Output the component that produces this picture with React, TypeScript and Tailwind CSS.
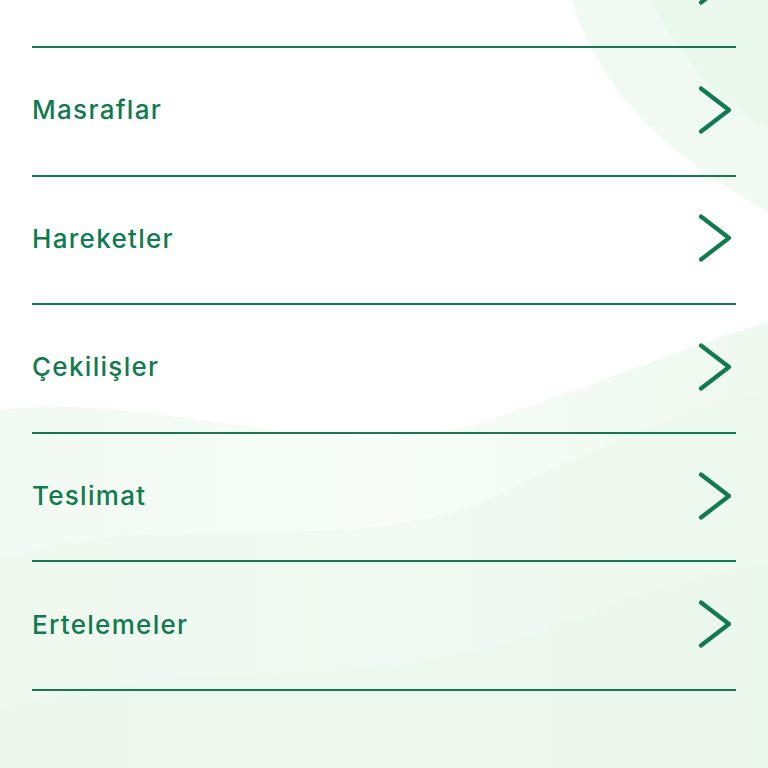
const items = ["", "Masraflar", "Hareketler", "Çekilişler", "Teslimat", "Ertelemeler"];

function Backdrop() {
  return (
    <svg
      className="pointer-events-none absolute inset-0 h-full w-full"
      viewBox="0 0 768 768"
      preserveAspectRatio="none"
    >
      <defs>
        <linearGradient id="fadeLeft" x1="0" y1="0" x2="1" y2="0">
          <stop offset="0" stopColor="#f1faf2" />
          <stop offset="0.5" stopColor="#f7fcf7" />
          <stop offset="1" stopColor="#eef9ef" />
        </linearGradient>
      </defs>
      <path d="M572 0 C600 90 660 150 768 212 L768 0 Z" fill="#f1faf2" />
      <path d="M650 0 C680 55 715 100 768 130 L768 0 Z" fill="#ebf8ed" />
      <path
        d="M0 410 C160 390 330 470 490 420 C610 380 690 345 768 322 L768 768 L0 768 Z"
        fill="url(#fadeLeft)"
      />
      <path
        d="M0 560 C180 500 360 570 520 485 C620 435 700 405 768 392 L768 768 L0 768 Z"
        fill="#ecf8ee"
        opacity="0.6"
      />
      <path
        d="M0 710 C200 650 380 700 560 625 C660 585 720 572 768 562 L768 768 L0 768 Z"
        fill="#eaf7ec"
        opacity="0.5"
      />
    </svg>
  );
}

function Chevron() {
  return (
    <svg className="mr-[5px] h-[52px] w-[32px] shrink-0" viewBox="0 0 32 52" fill="none">
      <polyline
        points="2,4.5 30,26 2,47.5"
        stroke="#117a4e"
        strokeWidth="4.2"
        strokeLinecap="round"
        strokeLinejoin="round"
      />
    </svg>
  );
}

export default function App() {
  return (
    <div className="relative h-[768px] w-[768px] overflow-hidden bg-white">
      <Backdrop />
      <ul className="relative -mt-[80.6px] px-8">
        {items.map((item, i) => (
          <li
            key={i}
            className="flex h-[128.6px] items-center justify-between border-b-2 border-[#157a50] pb-[3px]"
          >
            <span
              className="text-[26px] font-medium tracking-[1.3px] text-[#117a4e]"
              style={{ fontFamily: "Inter, 'Noto Sans', sans-serif" }}
            >
              {item}
            </span>
            <Chevron />
          </li>
        ))}
      </ul>
    </div>
  );
}
